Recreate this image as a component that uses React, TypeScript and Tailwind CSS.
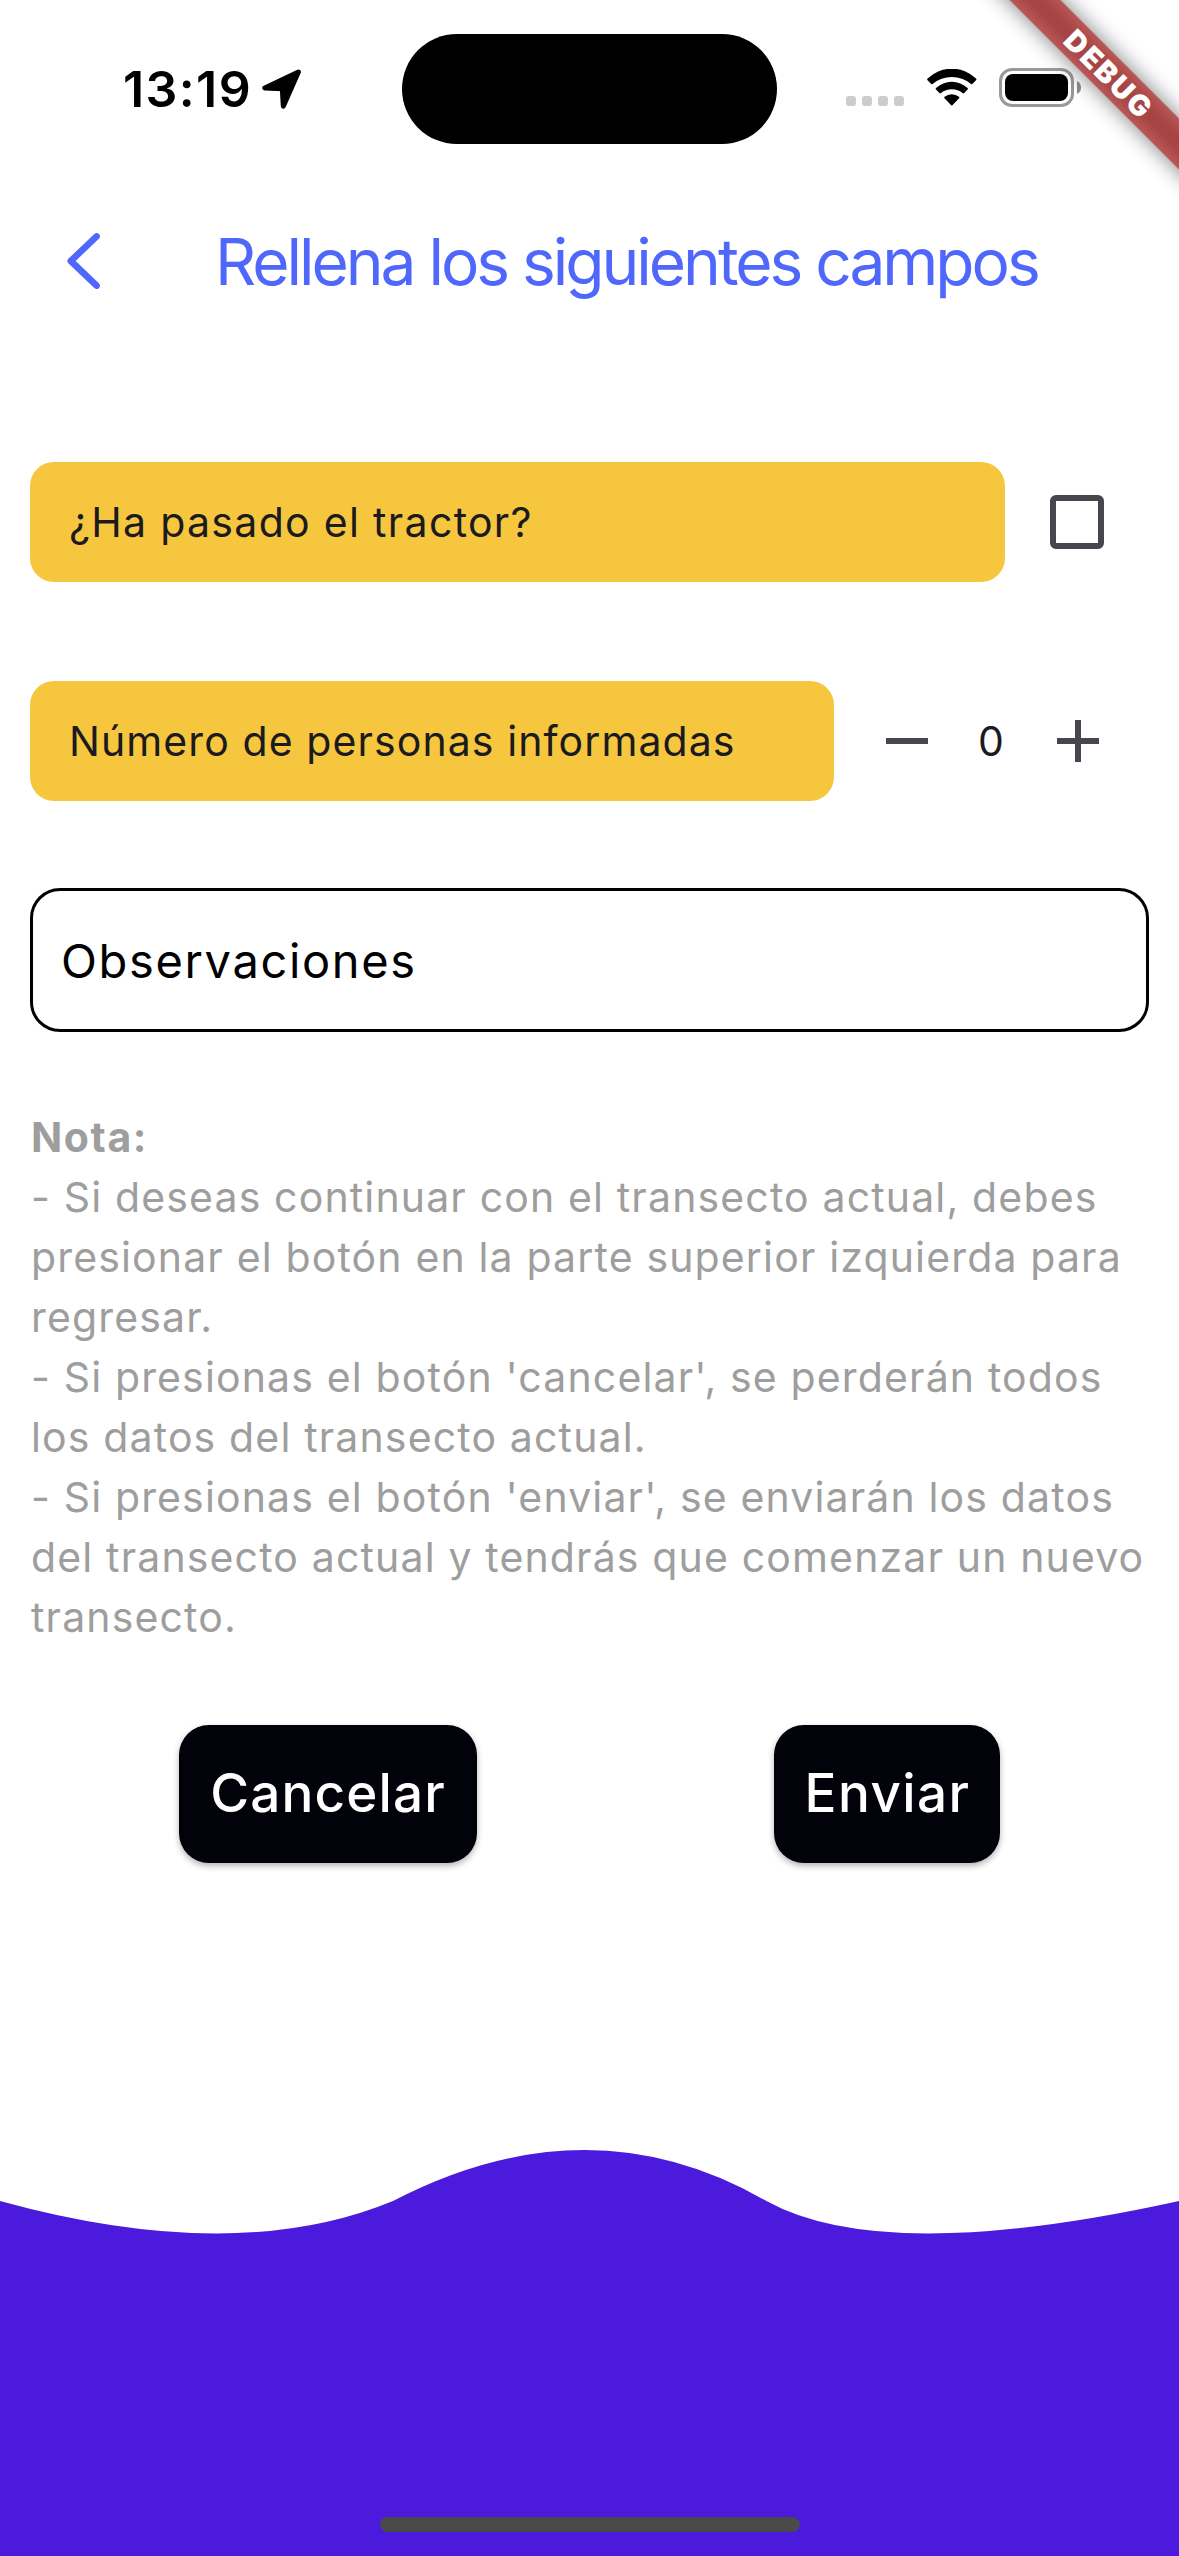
import React, { useState } from 'react';

const NOTE_LINES = [
  '- Si deseas continuar con el transecto actual, debes',
  'presionar el botón en la parte superior izquierda para',
  'regresar.',
  "- Si presionas el botón 'cancelar', se perderán todos",
  'los datos del transecto actual.',
  "- Si presionas el botón 'enviar', se enviarán los datos",
  'del transecto actual y tendrás que comenzar un nuevo',
  'transecto.',
];

function LocationArrow() {
  return (
    <svg width="40" height="40" viewBox="0 0 40 40" className="ml-[10px] shrink-0">
      <path
        d="M36.4 3.1 L2.8 18.9 L20.3 19.7 L21.3 37.2 Z"
        fill="black"
        stroke="black"
        strokeWidth="5"
        strokeLinejoin="round"
      />
    </svg>
  );
}

function WifiIcon() {
  return (
    <svg width="50" height="38" viewBox="0 0 50 38" className="ml-[23px]">
      <path d="M.6 11.2 Q-.3 10.4 .6 9.6 A34.5 34.5 0 0 1 49 9.6 Q49.9 10.4 49 11.2 L45.6 14.8 Q44.8 15.6 44 14.9 A30 30 0 0 0 5.6 14.9 Q4.8 15.6 4 14.8 Z" />
      <path d="M9 20.6 Q8.2 19.8 9 19 A23.3 23.3 0 0 1 40.6 19 Q41.4 19.8 40.6 20.6 L37.2 24 Q36.4 24.8 35.6 24.1 A17.5 17.5 0 0 0 14 24.1 Q13.2 24.8 12.4 24 Z" />
      <path d="M17.5 29.2 Q16.8 28.4 17.6 27.7 A11.5 11.5 0 0 1 32 27.7 Q32.8 28.4 32.1 29.2 L25.4 36.2 Q24.8 36.9 24.2 36.2 Z" />
    </svg>
  );
}

function BatteryIcon() {
  return (
    <div className="ml-[22px] flex items-center">
      <div className="flex h-[39px] w-[75px] items-center justify-center rounded-[13px] border-3 border-[#999999]">
        <div className="h-[27px] w-[63px] rounded-[8px] bg-black" />
      </div>
      <svg width="4" height="13" viewBox="0 0 4 13" className="ml-[3px]">
        <path d="M0 0 Q4 2 4 6.5 Q4 11 0 13 Z" fill="#8c8c8c" />
      </svg>
    </div>
  );
}

function StatusBar() {
  return (
    <div className="flex h-[177px] shrink-0 items-start">
      <div className="flex h-[177px] w-[402px] items-center pl-[123px]">
        <span className="text-[50px] leading-[60px] font-semibold tracking-[1.4px]">13:19</span>
        <LocationArrow />
      </div>
      <div className="mt-[34px] h-[110px] w-[375px] shrink-0 rounded-full bg-black" />
      <div className="mt-[68px] flex h-[39px] items-center pl-[69px]">
        <div className="flex gap-[6px] self-end pb-px">
          <i className="size-[10px] rounded-[3px] bg-[#cccccc]" />
          <i className="size-[10px] rounded-[3px] bg-[#cccccc]" />
          <i className="size-[10px] rounded-[3px] bg-[#cccccc]" />
          <i className="size-[10px] rounded-[3px] bg-[#cccccc]" />
        </div>
        <WifiIcon />
        <BatteryIcon />
      </div>
    </div>
  );
}

function DebugBanner() {
  return (
    <div className="pointer-events-none absolute top-0 right-0 size-[240px] overflow-hidden">
      <div className="absolute top-[54px] left-[-32px] h-[36px] w-[400px] rotate-45">
        <div className="absolute inset-0 bg-black/50 blur-[10.9px]" />
        <div className="absolute inset-0 flex items-center justify-center bg-[#b71c1c]/63 pl-[6px] text-[29px] leading-none font-black tracking-[2.2px] text-white">
          DEBUG
        </div>
      </div>
    </div>
  );
}

export default function App() {
  const [checked, setChecked] = useState(false);
  const [count, setCount] = useState(0);

  return (
    <div className="relative flex h-[2556px] w-[1179px] flex-col overflow-hidden bg-white font-['Inter',sans-serif] text-black">
      <StatusBar />

      <header className="flex h-[168px] shrink-0 items-center pl-[66px] text-[#4f68fb]">
        <button aria-label="Volver">
          <svg width="36" height="58" viewBox="0 0 36 58" fill="none" stroke="currentColor" strokeWidth="6.6" strokeLinecap="round" strokeLinejoin="round">
            <path d="M30.6 4.4 L4.8 29 L30.6 53.6" />
          </svg>
        </button>
        <h1 className="ml-[113px] pt-[2px] text-[64px] leading-[78px] tracking-[-3.02px] whitespace-nowrap">
          Rellena los siguientes campos
        </h1>
      </header>

      <main className="flex flex-col px-[30px] pt-[117px]">
        <div className="flex h-[120px] items-center">
          <div className="flex h-full w-[975px] items-center rounded-[24px] bg-[#f6c63e] pt-[2px] pl-[39px] text-[41px] tracking-[1.31px] text-[#1b1b1f]">
            ¿Ha pasado el tractor?
          </div>
          <button
            role="checkbox"
            aria-checked={checked}
            aria-label="Tractor"
            onClick={() => setChecked(!checked)}
            className="ml-[45px] size-[54px] rounded-[6px] border-6 border-[#46464f]"
          />
        </div>

        <div className="mt-[99px] flex h-[120px] items-center text-[41px] text-[#1b1b1f]">
          <div className="flex h-full w-[804px] items-center rounded-[24px] bg-[#f6c63e] pt-[2px] pl-[39px] tracking-[1.09px]">
            Número de personas informadas
          </div>
          <button aria-label="Menos" onClick={() => setCount(Math.max(0, count - 1))} className="ml-[52px]">
            <svg width="42" height="42" viewBox="0 0 42 42" stroke="#46464f" strokeWidth="6">
              <path d="M0 21 H42" />
            </svg>
          </button>
          <span className="ml-[50px] w-[27px] pt-[2px]">{count}</span>
          <button aria-label="Más" onClick={() => setCount(count + 1)} className="ml-[52px]">
            <svg width="42" height="42" viewBox="0 0 42 42" stroke="#46464f" strokeWidth="6">
              <path d="M0 21 H42 M21 0 V42" />
            </svg>
          </button>
        </div>

        <div className="mt-[87px] flex h-[144px] items-center rounded-[30px] border-3 border-black pt-[3px] pl-[28px] text-[47px] tracking-[1.65px]">
          Observaciones
        </div>

        <div className="mt-[75px] pl-px text-[41px] leading-[60px] tracking-[1.15px] whitespace-nowrap text-[#9e9e9e]">
          <p className="font-bold tracking-[1.6px]">Nota:</p>
          {NOTE_LINES.map((line) => (
            <p key={line}>{line}</p>
          ))}
        </div>

        <div className="mt-[78px] flex h-[138px] pl-[149px] text-[53px] font-medium text-white">
          <button className="h-full w-[298px] rounded-[30px] bg-[#02020b] pb-px tracking-[1.15px] shadow-[0_3px_6px_rgba(0,0,0,0.3)]">
            Cancelar
          </button>
          <button className="ml-[297px] h-full w-[226px] rounded-[30px] bg-[#02020b] pb-px pl-px tracking-[1.4px] shadow-[0_3px_6px_rgba(0,0,0,0.3)]">
            Enviar
          </button>
        </div>
      </main>

      <svg width="1179" height="410" viewBox="0 0 1179 410" className="mt-auto shrink-0">
        <path d="M0 55 Q235.8 120 393 55 Q589.5 -47 766.4 55 Q884.3 120 1179 55 V410 H0 Z" fill="#4b1adc" />
      </svg>

      <div className="absolute bottom-[24px] left-[380px] h-[15px] w-[420px] rounded-full bg-[#4a4a4a]" />
      <DebugBanner />
    </div>
  );
}
